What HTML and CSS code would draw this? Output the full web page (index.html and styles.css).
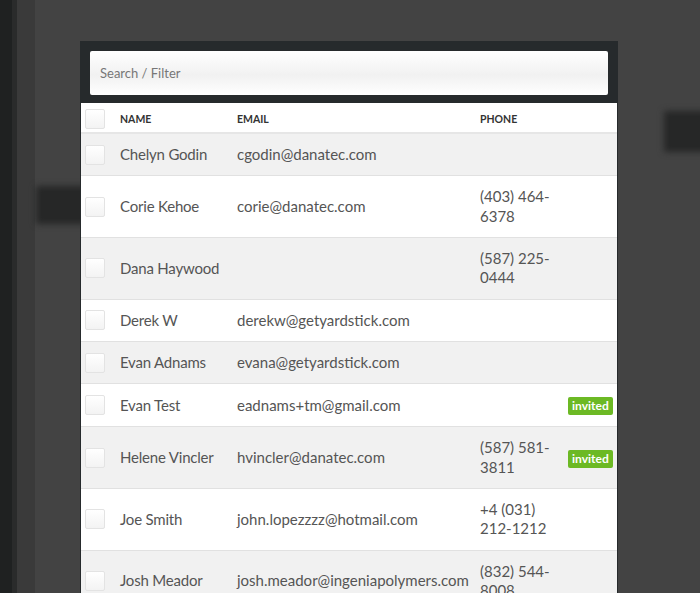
FILE: index.html
```html
<!DOCTYPE html>
<html lang="en">
<head>
    <meta charset="UTF-8">
    <title>Contacts</title>
    <link rel="stylesheet" href="styles.css">
</head>
<body>

    <div class="fundo">
        <div class="fundo-bloco bloco-esq"></div>
        <div class="fundo-bloco bloco-dir"></div>
    </div>

    <div class="modal">
        <div class="modal-topo">
            <input type="text" class="busca" placeholder="Search / Filter">
        </div>

        <table class="contatos">
            <colgroup>
                <col class="col-check">
                <col class="col-nome">
                <col class="col-email">
                <col class="col-fone">
                <col class="col-status">
            </colgroup>
            <thead>
                <tr>
                    <th class="check"><span class="caixa"></span></th>
                    <th>Name</th>
                    <th>Email</th>
                    <th>Phone</th>
                    <th></th>
                </tr>
            </thead>
            <tbody>
                <tr>
                    <td class="check"><span class="caixa"></span></td>
                    <td class="nome">Chelyn Godin</td>
                    <td>cgodin@danatec.com</td>
                    <td></td>
                    <td></td>
                </tr>
                <tr>
                    <td class="check"><span class="caixa"></span></td>
                    <td class="nome">Corie Kehoe</td>
                    <td>corie@danatec.com</td>
                    <td>(403) 464-6378</td>
                    <td></td>
                </tr>
                <tr>
                    <td class="check"><span class="caixa"></span></td>
                    <td class="nome">Dana Haywood</td>
                    <td></td>
                    <td>(587) 225-0444</td>
                    <td></td>
                </tr>
                <tr>
                    <td class="check"><span class="caixa"></span></td>
                    <td class="nome">Derek W</td>
                    <td>derekw@getyardstick.com</td>
                    <td></td>
                    <td></td>
                </tr>
                <tr>
                    <td class="check"><span class="caixa"></span></td>
                    <td class="nome">Evan Adnams</td>
                    <td>evana@getyardstick.com</td>
                    <td></td>
                    <td></td>
                </tr>
                <tr>
                    <td class="check"><span class="caixa"></span></td>
                    <td class="nome">Evan Test</td>
                    <td>eadnams+tm@gmail.com</td>
                    <td></td>
                    <td class="status"><span class="selo">invited</span></td>
                </tr>
                <tr>
                    <td class="check"><span class="caixa"></span></td>
                    <td class="nome">Helene Vincler</td>
                    <td>hvincler@danatec.com</td>
                    <td>(587) 581-3811</td>
                    <td class="status"><span class="selo">invited</span></td>
                </tr>
                <tr>
                    <td class="check"><span class="caixa"></span></td>
                    <td class="nome">Joe Smith</td>
                    <td>john.lopezzzz@hotmail.com</td>
                    <td>+4 (031) 212-1212</td>
                    <td></td>
                </tr>
                <tr>
                    <td class="check"><span class="caixa"></span></td>
                    <td class="nome">Josh Meador</td>
                    <td>josh.meador@ingeniapolymers.com</td>
                    <td>(832) 544-8008</td>
                    <td></td>
                </tr>
            </tbody>
        </table>
    </div>

</body>
</html>
```

FILE: styles.css
```css
body {
    font-family: Lato, "Liberation Sans", sans-serif;
    background-color: #434343;
    margin: 0;
    padding: 0;
    overflow: hidden;
}

/* App atrás do modal */
.fundo {
    position: fixed;
    top: 0;
    left: 0;
    right: 0;
    bottom: 0;
    background: linear-gradient(to right, #1f2121 0, #1f2121 12px, #2a2b2b 12px, #2a2b2b 17px, #3a3a3a 17px, #3a3a3a 35px, #434343 35px);
}

.fundo-bloco {
    position: absolute;
    background-color: #262727;
    filter: blur(3px);
}

.bloco-esq {
    left: 36px;
    top: 186px;
    width: 60px;
    height: 38px;
}

.bloco-dir {
    left: 664px;
    top: 111px;
    width: 60px;
    height: 41px;
}

/* Modal */
.modal {
    position: relative;
    width: 536px;
    margin: 41px 0 0 80px;
    border: 1px solid #262a2c;
    border-bottom: none;
    background-color: #fff;
}

.modal-topo {
    background-color: #262a2c;
    padding: 9px 9px 8px 9px;
}

.busca {
    display: block;
    width: 100%;
    height: 44px;
    box-sizing: border-box;
    border: none;
    border-radius: 2px;
    padding: 0 10px;
    font-family: inherit;
    font-size: 13px;
    color: #555;
    background: linear-gradient(to bottom, #fff 0%, #f1f1f1 55%, #fff 100%);
}

.busca::placeholder {
    color: #777;
}

.contatos {
    width: 100%;
    border-collapse: collapse;
    table-layout: fixed;
}

.col-check { width: 31px; }
.col-nome { width: 117px; }
.col-email { width: 243px; }
.col-fone { width: 88px; }

.contatos th,
.contatos td {
    padding: 10.9px 8px;
    text-align: left;
    vertical-align: middle;
    border-bottom: 1px solid #e1e1e1;
}

.contatos th {
    padding-top: 6px;
    padding-bottom: 3px;
    font-size: 10.5px;
    font-weight: bold;
    text-transform: uppercase;
    color: #333;
    height: 19px;
    border-bottom-color: #e6e6e6;
    border-bottom-width: 2px;
}

.contatos td {
    font-size: 15px;
    line-height: 19.5px;
    color: #555;
}

.contatos .nome {
    white-space: nowrap;
    letter-spacing: -0.2px;
}

.contatos .check {
    padding-left: 4px;
    padding-right: 7px;
}

.contatos td.check {
    padding-top: 0;
    padding-bottom: 0;
}

.contatos tbody tr:nth-child(odd) td {
    background-color: #f1f1f1;
}

.caixa {
    display: block;
    width: 18px;
    height: 18px;
    border: 1px solid #e3e3e3;
    border-radius: 2px;
    background: linear-gradient(to bottom, #fff, #f3f3f3);
}

.status {
    text-align: right !important;
    padding-right: 6px !important;
}

.selo {
    display: inline-block;
    background-color: #6cb924;
    color: #fff;
    font-size: 12px;
    font-weight: bold;
    line-height: 18px;
    padding: 0 4px;
    border-radius: 2px;
}
```
